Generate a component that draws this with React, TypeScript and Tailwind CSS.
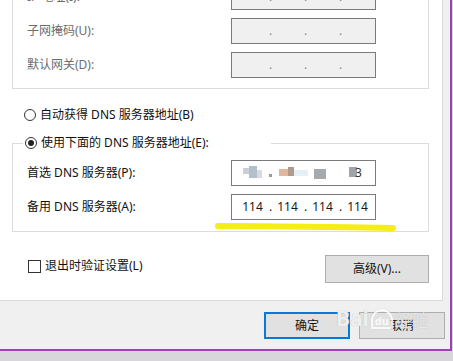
import React from "react"

const font = "font-['Segoe_UI','Noto_Sans','Noto_Sans_CJK_SC',sans-serif]"

function IpBox({ values, disabled }: { values?: string[]; disabled?: boolean }) {
  return (
    <div
      className={`relative w-[145px] h-[26px] border border-[#7a7a7a] flex items-center pl-[3px] ${
        disabled ? "bg-[#f0f0f0]" : "bg-white"
      }`}
    >
      {values
        ? values.map((v, i) => (
            <span key={i} className="w-[35px] text-center text-[12px] text-[#1a1a1a]">
              {v}
            </span>
          ))
        : null}
      {[38, 73, 108].map((x) => (
        <span
          key={x}
          className={`absolute top-[5px] text-[12px] leading-[14px] ${disabled ? "text-[#8a8a8a]" : "text-[#1a1a1a]"}`}
          style={{ left: x - 1 }}
        >
          .
        </span>
      ))}
    </div>
  )
}

function Row({ label, children, muted }: { label: string; children: React.ReactNode; muted?: boolean }) {
  return (
    <div className="flex items-center h-[26px]">
      <span className={`w-[204px] text-[12px] ${muted ? "text-[#6d6d6d]" : "text-[#111]"}`}>{label}</span>
      {children}
    </div>
  )
}

// blurred-out primary DNS
function MosaicBox() {
  return (
    <div className="relative w-[145px] h-[26px] border border-[#7a7a7a] bg-white">
      <div className="absolute left-[11px] top-[7px] w-[6px] h-[6px] bg-[#c9cfd8]" />
      <div className="absolute left-[17px] top-[5px] w-[8px] h-[12px] bg-[#b4bfcc]" />
      <div className="absolute left-[25px] top-[9px] w-[5px] h-[8px] bg-[#d7dbe1]" />
      <div className="absolute left-[37px] top-[13px] w-[3px] h-[3px] bg-[#9a9a9a]" />
      <div className="absolute left-[47px] top-[8px] w-[10px] h-[7px] bg-[#dfb89f]" />
      <div className="absolute left-[56px] top-[6px] w-[6px] h-[9px] bg-[#b09a8c]" />
      <div className="absolute left-[62px] top-[9px] w-[14px] h-[6px] bg-[#e6eef6]" />
      <div className="absolute left-[82px] top-[8px] w-[12px] h-[10px] bg-[#a6aaae]" />
      <div className="absolute left-[117px] top-[6px] w-[8px] h-[10px] bg-[#9fa4ab]" />
      <span className="absolute left-[123px] top-[3px] text-[12px] text-[#333]">3</span>
    </div>
  )
}

export default function App() {
  return (
    <div className={`w-[453px] h-[361px] overflow-hidden bg-[#d9d6db] ${font}`}>
      <div className="w-[452px] h-[351px] bg-[#f0f0f0] border-r-2 border-b-2 border-[#9b42b6] flex flex-col">
        {/* tab panel */}
        <div className="relative w-[443px] h-[301px] shrink-0 bg-white border-r border-b border-[#dadada] overflow-hidden">
          <div className="-mt-[30px]">
            <div className="ml-[12px] w-[417px] border border-[#dcdcdc] pt-[13px] pb-[10px] pl-[14px] flex flex-col gap-[8px]">
              <Row label="IP 地址(I):" muted>
                <IpBox disabled />
              </Row>
              <Row label="子网掩码(U):" muted>
                <IpBox disabled />
              </Row>
              <Row label="默认网关(D):" muted>
                <IpBox disabled />
              </Row>
            </div>

            <div className="mt-[18px] ml-[24px] flex items-center h-[16px]">
              <span className="w-[12px] h-[12px] rounded-full border border-[#333]" />
              <span className="ml-[4px] text-[12px] text-[#111]">自动获得 DNS 服务器地址(B)</span>
            </div>

            <div className="relative mt-[20px] ml-[12px] w-[417px] border border-[#dcdcdc] pt-[16px] pb-[11px] pl-[14px] flex flex-col gap-[8px]">
              <div className="absolute -top-[9px] left-[10px] w-[248px] h-[16px] bg-white flex items-center pl-[2px]">
                <span className="w-[12px] h-[12px] rounded-full border border-[#333] flex items-center justify-center">
                  <span className="w-[6px] h-[6px] rounded-full bg-[#222]" />
                </span>
                <span className="ml-[4px] text-[12px] text-[#111]">使用下面的 DNS 服务器地址(E):</span>
              </div>
              <Row label="首选 DNS 服务器(P):">
                <MosaicBox />
              </Row>
              <Row label="备用 DNS 服务器(A):">
                <IpBox values={["114", "114", "114", "114"]} />
              </Row>
            </div>

            <div className="mt-[23px] flex items-start">
              <div className="ml-[28px] mt-[2px] flex items-center">
                <span className="w-[13px] h-[13px] border border-[#333] bg-white" />
                <span className="ml-[4px] text-[12px] text-[#111]">退出时验证设置(L)</span>
              </div>
              <button className="ml-auto mr-[13px] w-[104px] h-[28px] bg-[#e1e1e1] border border-[#adadad] text-[12px] text-[#111]">
                高级(V)...
              </button>
            </div>
          </div>

          {/* yellow marker stroke */}
          <svg className="absolute left-[213px] top-[221px]" width="186" height="12" viewBox="0 0 186 12">
            <path d="M5 5 Q 90 5.5 180 7" stroke="#f5ee16" strokeWidth="6" strokeLinecap="round" fill="none" />
          </svg>
        </div>

        {/* dialog buttons */}
        <div className="relative flex justify-end gap-[9px] pr-[5px] mt-[11px]">
          <button className="w-[86px] h-[27px] bg-[#e1e1e1] border-2 border-[#0a78d4] text-[12px] text-[#111]">确定</button>
          <button className="w-[86px] h-[27px] bg-[#e1e1e1] border border-[#adadad] text-[12px] text-[#111]">取消</button>
          <div className="absolute left-[336px] top-[-4px] flex items-end pointer-events-none">
            <span className="text-[21px] font-bold text-white/80 [text-shadow:0_0_1px_#aaa] leading-none">Bai</span>
            <span className="ml-[2px] w-[22px] h-[20px] rounded-t-full border-2 border-white/80 text-[11px] text-white/80 font-bold leading-none flex items-end justify-center pb-[1px] [box-shadow:0_0_1px_#aaa]">
              du
            </span>
            <span className="ml-[2px] text-[17px] text-white/70 [text-shadow:0_0_1px_#aaa] leading-none">经验</span>
          </div>
        </div>
      </div>
    </div>
  )
}
